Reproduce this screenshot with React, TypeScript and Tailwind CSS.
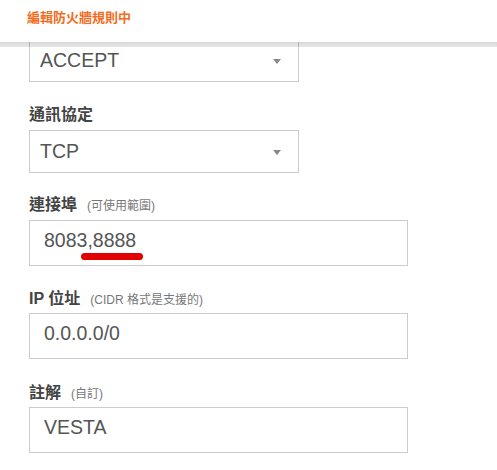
const font = { fontFamily: '"Liberation Sans", "Noto Sans CJK TC", sans-serif' }

function SelectBox({ value, className = "" }: { value: string; className?: string }) {
    return (
        <div className={`flex items-center justify-between w-[270px] h-[43px] border border-[#cccccc] bg-white pl-[10px] pr-[17px] ${className}`}>
            <span className="text-[19.5px] text-[#555555]">{value}</span>
            <svg width="8" height="5" viewBox="0 0 8 5" className="mt-[1px]">
                <path d="M0 0 L8 0 L4 5 Z" fill="#888888" />
            </svg>
        </div>
    )
}

function Label({ title, hint, className = "" }: { title: string; hint?: string; className?: string }) {
    return (
        <div className={`flex items-baseline h-[22px] leading-[22px] ${className}`}>
            <span className="text-[16px] font-bold text-[#444444]">{title}</span>
            {hint && <span className="ml-[10px] text-[12px] leading-[22px] text-[#777777]">{hint}</span>}
        </div>
    )
}

function TextBox({ value, className = "", children }: { value: string; className?: string; children?: React.ReactNode }) {
    return (
        <div className={`relative w-[379px] h-[46px] border border-[#cccccc] bg-white pl-[14px] pt-[8px] ${className}`}>
            <span className="text-[19.5px] leading-[22px] text-[#555555]">{value}</span>
            {children}
        </div>
    )
}

export default function App() {
    return (
        <div className="w-[497px] h-[470px] bg-white overflow-hidden" style={font}>
            {/* Header */}
            <div className="h-[42px] px-[27px] pt-[9px]">
                <h1 className="text-[13px] font-bold text-[#f36c21] leading-[18px]">編輯防火牆規則中</h1>
            </div>

            {/* Form, scrolled under the header */}
            <div className="relative h-[428px] overflow-hidden px-[29px]">
                <div className="absolute left-0 right-0 top-0 h-[5px] bg-gradient-to-b from-black/15 to-black/10" />

                <SelectBox value="ACCEPT" className="-mt-[3px]" />

                <Label title="通訊協定" className="mt-[22px]" />
                <SelectBox value="TCP" className="mt-[4px]" />

                <Label title="連接埠" hint="(可使用範圍)" className="mt-[21px]" />
                <TextBox value="8083,8888" className="mt-[4px]">
                    <div className="absolute left-[51px] top-[32px] w-[62px] h-[7px] rounded-full bg-[#e30000]" />
                </TextBox>

                <Label title="IP 位址" hint="(CIDR 格式是支援的)" className="mt-[22px]" />
                <TextBox value="0.0.0.0/0" className="mt-[3px] h-[45px]" />

                <Label title="註解" hint="(自訂)" className="mt-[23px]" />
                <TextBox value="VESTA" className="mt-[3px]" />
            </div>
        </div>
    )
}
